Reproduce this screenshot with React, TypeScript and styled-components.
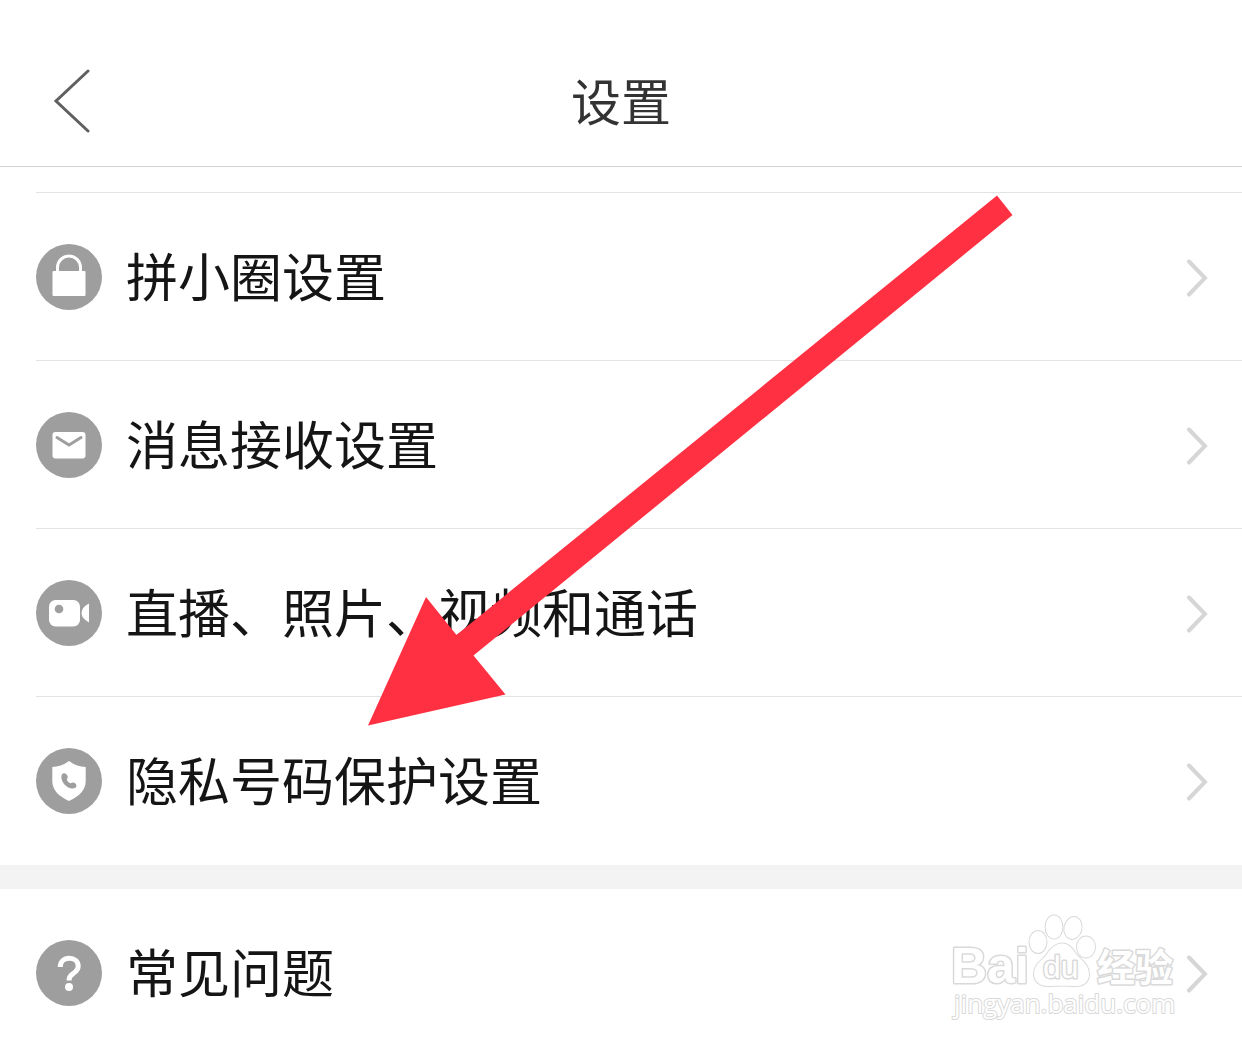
import React from "react";
import styled, { createGlobalStyle } from "styled-components";

const GlobalStyle = createGlobalStyle`
  *, *::before, *::after { box-sizing: border-box; }
  body {
    margin: 0;
    background: #fff;
    color: #151516;
    font-family: "Noto Sans CJK SC", "Noto Sans", sans-serif;
  }
`;

const Screen = styled.div`
  position: relative;
  display: flex;
  flex-direction: column;
  height: 100vh;
  overflow: hidden;
  background: #fff;
`;

const Header = styled.header`
  display: grid;
  grid-template-columns: 92px 1fr 92px;
  padding-top: 36px;
  border-bottom: 1px solid #d2d2d2;
  flex: none;
`;

const BackButton = styled.button`
  display: flex;
  align-items: center;
  justify-content: flex-end;
  height: 130px;
  padding: 0;
  border: 0;
  background: none;
  cursor: pointer;
`;

const Title = styled.h1`
  margin: 0;
  font-size: 50px;
  line-height: 126px;
  font-weight: 400;
  text-align: center;
  color: #333;
`;

const Content = styled.main`
  flex: 1;
  min-height: 0;
  overflow: hidden;
  padding-top: 25px;
`;

const Group = styled.ul`
  margin: 0;
  padding: 0 0 1px 36px;
  list-style: none;

  & + & {
    border-top: 24px solid #f3f3f3;
  }
`;

const Item = styled.li<{ $divided: boolean }>`
  border-top: ${(p) => (p.$divided ? "1px solid #e3e3e3" : "0")};
`;

const RowLink = styled.a`
  display: flex;
  align-items: center;
  gap: 24px;
  padding: 51px 34px 50px 0;
  color: inherit;
  text-decoration: none;
`;

const Label = styled.span`
  flex: 1;
  padding-bottom: 4px;
  font-size: 52px;
  line-height: 62px;
  white-space: nowrap;
`;

const Icon = styled.svg`
  display: block;
  flex: none;
`;

const ArrowOverlay = styled.svg`
  position: absolute;
  left: 368px;
  top: 195px;
  pointer-events: none;
`;

const Watermark = styled.svg`
  position: absolute;
  right: 62px;
  bottom: 22px;
  pointer-events: none;
  fill: #fff;
  stroke: #d9d9d9;
  stroke-width: 2px;
  stroke-linejoin: round;
  paint-order: stroke;
`;

const LatinMark = styled.text<{ $size: number; $weight: number }>`
  font-family: "Liberation Sans", sans-serif;
  font-size: ${(p) => p.$size}px;
  font-weight: ${(p) => p.$weight};
  stroke-width: 3px;
`;

const HanMark = styled.text`
  font-size: 38px;
  font-weight: 700;
  stroke-width: 3px;
`;

const UrlMark = styled.text`
  font-family: "Open Sans", sans-serif;
  font-size: 26px;
`;

const glyphs = {
  lock: (
    <>
      <path d="M21.500 28v-4.500a11.500 11.500 0 0 1 23 0V28" fill="none" stroke="#fff" strokeWidth="3" />
      <rect x="16.500" y="27" width="33" height="25" rx="1" fill="#fff" />
    </>
  ),
  mail: (
    <>
      <rect x="16.500" y="20" width="33" height="26.500" rx="3" fill="#fff" />
      <path d="M21 25.500l12 7.500 12-7.500" fill="none" stroke="#9e9e9e" strokeWidth="3" strokeLinecap="round" />
    </>
  ),
  video: (
    <>
      <rect x="13" y="20" width="31" height="26.500" rx="6.500" fill="#fff" />
      <circle cx="23" cy="29" r="4.300" fill="#9e9e9e" />
      <path d="M53 23.500v19q-7.500-4-7.500-9.500t7.500-9.500z" fill="#fff" />
    </>
  ),
  shield: (
    <>
      <path d="M33 13c4.500 3.500 10 5.500 16.700 6v14c0 9.500-7 15.500-16.700 20-9.700-4.500-16.700-10.500-16.700-20V19C23 18.500 28.500 16.500 33 13z" fill="#fff" />
      <path d="M27.200 25.500c2-.8 4.500 1.300 4.500 3.500 0 1-.9 2-.7 2.700.4 1.600 1.800 3 3.400 3.500.8.200 1.900-.7 3-.6 1.800.2 3.300 2 3 3.700-.4 1.700-2.500 2.300-4.700 2.100-5.300-.5-10-5.500-10.300-10.800-.1-2 .3-3.500 1.800-4.100z" fill="#9e9e9e" />
    </>
  ),
  question: (
    <>
      <path d="M24.300 27c0-5.500 3.800-8.700 8.900-8.700s9 3.200 9 7.900c0 4-2.700 5.700-5.300 7.500-2.500 1.700-3.900 3.200-3.900 6.800" fill="none" stroke="#fff" strokeWidth="5" />
      <circle cx="33" cy="47" r="4" fill="#fff" />
    </>
  ),
};

type GlyphName = keyof typeof glyphs;

const groups: { name: GlyphName; label: string }[][] = [
  [
    { name: "lock", label: "拼小圈设置" },
    { name: "mail", label: "消息接收设置" },
    { name: "video", label: "直播、照片、视频和通话" },
    { name: "shield", label: "隐私号码保护设置" },
  ],
  [{ name: "question", label: "常见问题" }],
];

function SettingRow({ name, label, divided }: { name: GlyphName; label: string; divided: boolean }) {
  return (
    <Item $divided={divided}>
      <RowLink href="#">
        <Icon width="66" height="66" viewBox="0 0 66 66" aria-hidden="true">
          <circle cx="33" cy="33" r="33" fill="#9e9e9e" />
          {glyphs[name]}
        </Icon>
        <Label>{label}</Label>
        <Icon width="22" height="40" viewBox="0 0 22 40" aria-hidden="true">
          <path d="M3 4.500L19 21 3 37.500" fill="none" stroke="#d6d6d6" strokeWidth="4" strokeLinecap="round" />
        </Icon>
      </RowLink>
    </Item>
  );
}

export default function App() {
  return (
    <Screen>
      <GlobalStyle />
      <Header>
        <BackButton type="button" aria-label="返回">
          <Icon width="40" height="64" viewBox="0 0 40 64">
            <path d="M36 2L4 32l32 30" fill="none" stroke="#606060" strokeWidth="3" strokeLinecap="round" />
          </Icon>
        </BackButton>
        <Title>设置</Title>
      </Header>
      <Content>
        {groups.map((rows, g) => (
          <Group key={g}>
            {rows.map((row) => (
              <SettingRow key={row.name} {...row} divided={g === 0} />
            ))}
          </Group>
        ))}
      </Content>
      <Watermark width="230" height="116" viewBox="950 910 230 116">
        <LatinMark $size={50} $weight={700} x="951" y="983">Bai</LatinMark>
        <path d="M1062 943.500c6 0 10 4 13 9 4 6 14 11 14 22 0 9-8 12-14 11.500-7-.5-18-.5-26 0-8 .5-15-4-15-12 0-10 9-14 13-20 4-6 9-10.500 15-10.500z" />
        <ellipse cx="1038" cy="942" rx="8.500" ry="11" />
        <ellipse cx="1054" cy="927" rx="8.500" ry="11.500" />
        <ellipse cx="1073" cy="928" rx="8.500" ry="11" transform="rotate(12 1073 928)" />
        <ellipse cx="1086" cy="947" rx="9" ry="10.500" />
        <LatinMark $size={32} $weight={400} x="1043" y="978">du</LatinMark>
        <HanMark x="1097" y="981">经验</HanMark>
        <UrlMark x="954" y="1013">jingyan.baidu.com</UrlMark>
      </Watermark>
      <ArrowOverlay width="646" height="532" viewBox="368 195 646 532" aria-hidden="true">
        <path d="M368 725.500L426 597l30.500 38L997 195.500l15.500 19.500L473.500 655.500 505.500 694.500z" fill="#ff3042" />
      </ArrowOverlay>
    </Screen>
  );
}
